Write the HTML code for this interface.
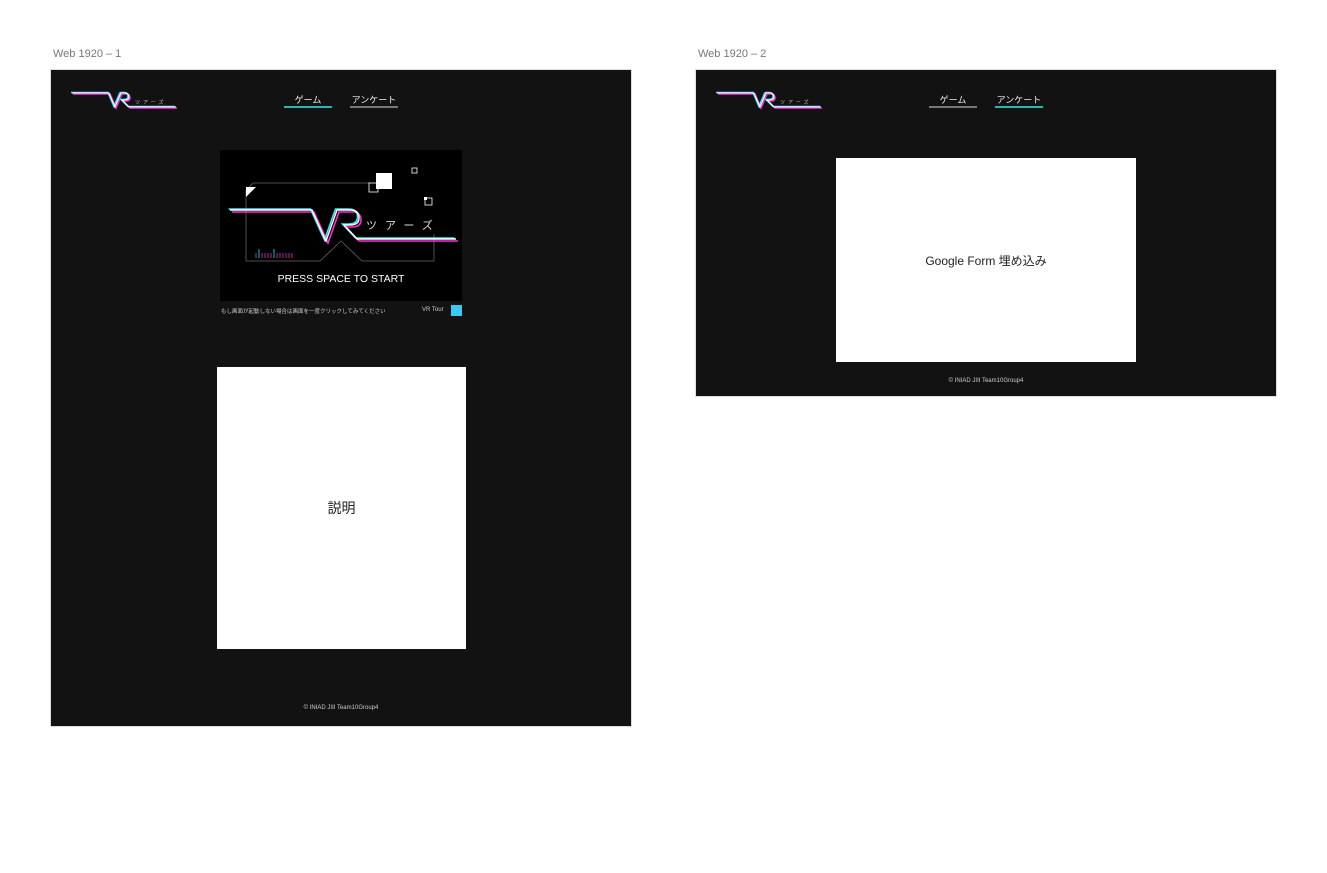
<!DOCTYPE html>
<html><head><meta charset="utf-8"><style>
body{margin:0;width:1327px;height:873px;background:#fff;position:relative;font-family:"Liberation Sans","Noto Sans CJK JP",sans-serif;overflow:hidden}
.lbl{position:absolute;font-size:11px;color:#777}
.frame{position:absolute;background:#121212;border:1px solid #ddd;box-sizing:border-box}
.nav{position:absolute;font-size:9px;color:#eee;text-align:center;height:12px;line-height:12px}
.t{position:absolute;color:#fff;white-space:nowrap}
</style></head><body>
<div class="lbl" style="left:53px;top:48px">Web 1920 – 1</div>
<div class="lbl" style="left:698px;top:48px">Web 1920 – 2</div>

<svg width="0" height="0" style="position:absolute"><defs>
<g id="logo" fill="none" stroke-width="1.6" stroke-linejoin="miter">
<path d="M0,4 H37 L43,18 L49,4 M49,4 H53 Q57,4 57,8 Q57,11 53,11 H50 L57,18 H104" stroke="#ff2bd6" transform="translate(1,1)"/>
<path d="M0,4 H37 L43,18 L49,4 M49,4 H53 Q57,4 57,8 Q57,11 53,11 H50 L57,18 H104" stroke="#3fe8f0" transform="translate(-1,-0.5)"/>
<path d="M0,4 H37 L43,18 L49,4 M49,4 H53 Q57,4 57,8 Q57,11 53,11 H50 L57,18 H104" stroke="#fff" stroke-width="1"/>
</g></defs></svg>

<!-- frame 1 -->
<div class="frame" style="left:50px;top:69px;width:582px;height:658px">
 <svg style="position:absolute;left:21px;top:21px" width="108" height="22" viewBox="0 0 108 22" overflow="visible"><use href="#logo" transform="translate(0,-2)"/><text x="63" y="13" font-size="5" fill="#ccc" letter-spacing="3">ツアーズ</text></svg>
 <div class="nav" style="left:233px;top:24px;width:48px;border-bottom:2px solid #2bb3ad">ゲーム</div>
 <div class="nav" style="left:299px;top:24px;width:48px;border-bottom:2px solid #777">アンケート</div>
 <div style="position:absolute;left:169px;top:80px;width:242px;height:151px;background:#000">
  <svg width="242" height="151" style="position:absolute;left:0;top:0">
   <path d="M26,60 V40 L33,33 H150" stroke="#666" fill="none" stroke-width="0.8"/>
   <path d="M26,60 V111 H100 L121,91 L142,111 H214 V84" stroke="#666" fill="none" stroke-width="0.8"/>
   <path d="M26,37 L26,47 L36,37Z" fill="#fff"/>
   <rect x="156" y="23" width="16" height="16" fill="#fff"/>
   <rect x="149" y="33" width="9" height="9" fill="none" stroke="#fff" stroke-width="0.8"/>
   <rect x="192" y="18" width="5" height="5" fill="none" stroke="#fff" stroke-width="0.8"/>
   <rect x="205" y="48" width="7" height="7" fill="none" stroke="#fff" stroke-width="0.8"/>
   <rect x="204" y="47" width="3" height="3" fill="#fff"/>
   <g stroke-width="1.6" fill="none">
    <path d="M10,60 H92 L106,91 L117,60 H130 Q139,60 139,68 Q139,75 130,75 H124 L137,89 H236" stroke="#ff2bd6" transform="translate(2,2)"/>
    <path d="M10,60 H92 L106,91 L117,60 H130 Q139,60 139,68 Q139,75 130,75 H124 L137,89 H236" stroke="#3fe8f0" transform="translate(-1.5,-1)"/>
    <path d="M10,60 H92 L106,91 L117,60 H130 Q139,60 139,68 Q139,75 130,75 H124 L137,89 H236" stroke="#fff" stroke-width="1.4"/>
   </g>
   <text x="146" y="79" font-size="11" fill="#ddd" letter-spacing="8" font-family="Noto Sans CJK JP,sans-serif">ツアーズ</text>
   <g stroke-width="1">
    <path d="M36,108v-5M39,108v-9M42,108v-5M45,108v-5M48,108v-5M51,108v-5M54,108v-9M57,108v-5M60,108v-5M63,108v-5M66,108v-5M69,108v-5M72,108v-5" stroke="#b02aa0"/>
    <path d="M39,108v-9M54,108v-9" stroke="#2bb3ad"/>
   </g>
   <text x="121" y="132" font-size="10.5" fill="#fff" text-anchor="middle" font-family="Liberation Sans,sans-serif">PRESS SPACE TO START</text>
  </svg>
 </div>
 <div class="t" style="left:170px;top:237px;font-size:5.5px;color:#ccc">もし画面が起動しない場合は画面を一度クリックしてみてください</div>
 <div class="t" style="left:371px;top:237px;font-size:6px;color:#ccc">VR Tour</div>
 <div style="position:absolute;left:400px;top:235px;width:11px;height:11px;background:#38c9f5"></div>
 <div style="position:absolute;left:166px;top:297px;width:249px;height:282px;background:#fff;display:flex;align-items:center;justify-content:center;font-size:14px;color:#222">説明</div>
 <div class="t" style="left:0;width:580px;text-align:center;top:635px;font-size:6px;color:#ccc">© INIAD JIII Team10Group4</div>
</div>

<!-- frame 2 -->
<div class="frame" style="left:695px;top:69px;width:582px;height:328px">
 <svg style="position:absolute;left:21px;top:21px" width="108" height="22" overflow="visible" viewBox="0 0 108 22"><use href="#logo" transform="translate(0,-2)"/><text x="63" y="13" font-size="5" fill="#ccc" letter-spacing="3">ツアーズ</text></svg>
 <div class="nav" style="left:233px;top:24px;width:48px;border-bottom:2px solid #777">ゲーム</div>
 <div class="nav" style="left:299px;top:24px;width:48px;border-bottom:2px solid #2bb3ad">アンケート</div>
 <div style="position:absolute;left:140px;top:88px;width:300px;height:204px;background:#fff;display:flex;align-items:center;justify-content:center;font-size:12px;color:#222">Google Form 埋め込み</div>
 <div class="t" style="left:0;width:580px;text-align:center;top:308px;font-size:6px;color:#ccc">© INIAD JIII Team10Group4</div>
</div>
</body></html>
